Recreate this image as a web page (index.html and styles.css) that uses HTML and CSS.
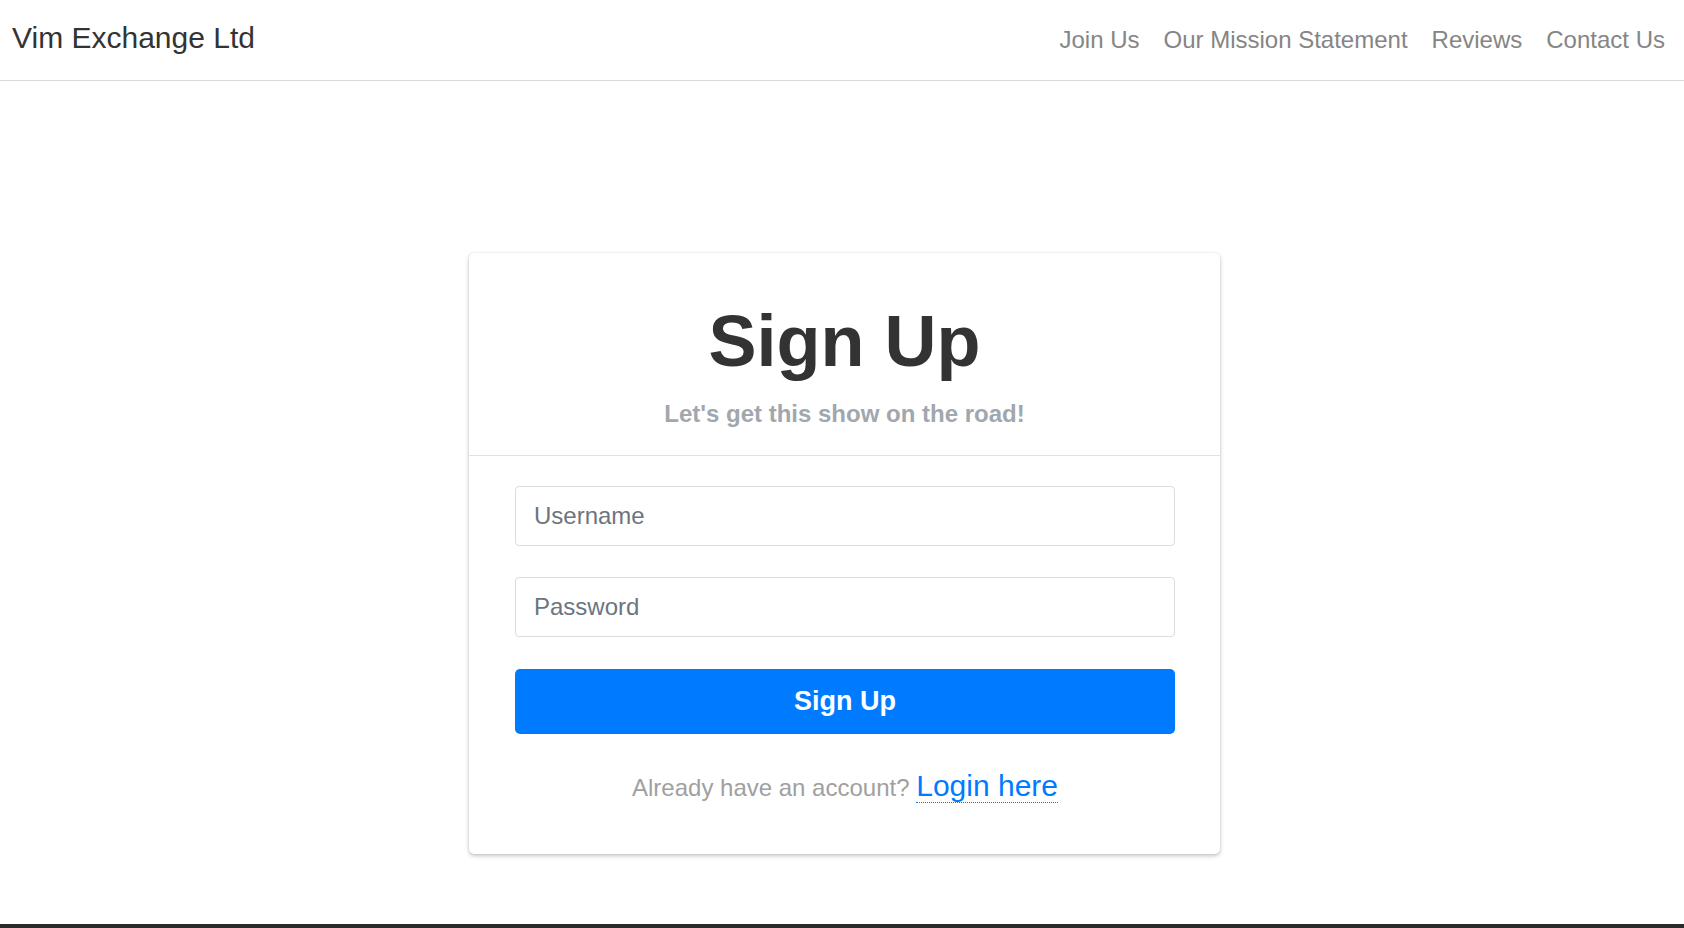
FILE: index.html
```html
<!DOCTYPE html>
<html lang="en">
<head>
<meta charset="utf-8">
<title>Vim Exchange Ltd - Sign Up</title>
<link rel="stylesheet" href="styles.css">
</head>
<body>
<header class="navbar">
  <a class="brand" href="#">Vim Exchange Ltd</a>
  <nav class="nav">
    <a class="nav-link" href="#">Join Us</a>
    <a class="nav-link" href="#">Our Mission Statement</a>
    <a class="nav-link" href="#">Reviews</a>
    <a class="nav-link" href="#">Contact Us</a>
  </nav>
</header>
<main class="main">
  <section class="card">
    <div class="card-header">
      <h1 class="title">Sign Up</h1>
      <p class="subtitle">Let's get this show on the road!</p>
    </div>
    <form class="card-body">
      <input class="field" type="text" placeholder="Username">
      <input class="field field-last" type="password" placeholder="Password">
      <button class="btn" type="button">Sign Up</button>
      <p class="login">Already have an account? <a class="login-link" href="#">Login here</a></p>
    </form>
  </section>
</main>
<footer class="footer"></footer>
</body>
</html>
```

FILE: styles.css
```css
* { box-sizing: border-box; }
html, body { margin: 0; padding: 0; }
body {
  font-family: "Liberation Sans", Arial, sans-serif;
  background: #fff;
  color: #333;
  height: 100vh;
  display: flex;
  flex-direction: column;
  overflow: hidden;
}
.navbar {
  height: 81px;
  display: flex;
  align-items: baseline;
  justify-content: space-between;
  padding: 15px 7px 0 12px;
  border-bottom: 1px solid #dadada;
  flex: none;
}
.brand {
  font-size: 30px;
  line-height: 1.5;
  color: #333;
  text-decoration: none;
}
.nav { display: flex; align-items: baseline; }
.nav-link {
  font-size: 24px;
  line-height: 1.5;
  padding: 0 12px;
  color: #858585;
  text-decoration: none;
}
.main {
  flex: 1;
  display: flex;
  justify-content: center;
  align-items: flex-start;
  padding: 172px 0 0 5px;
}
.card {
  width: 751px;
  background: #fff;
  border-radius: 5px;
  box-shadow: 0 2px 4px rgba(0,0,0,0.22), 0 0 2px rgba(0,0,0,0.12);
}
.card-header {
  padding: 45px 45px 23px;
  text-align: center;
  border-bottom: 1px solid #e2e2e2;
}
.title {
  margin: 0;
  font-size: 72px;
  line-height: 1.2;
  font-weight: bold;
  color: #333;
}
.subtitle {
  margin: 12px 0 0;
  font-size: 24px;
  line-height: 1.5;
  font-weight: bold;
  color: #a0a7ad;
}
.card-body {
  padding: 30px 45px 46px 46px;
  display: flex;
  flex-direction: column;
  margin: 0;
}
.field {
  height: 60px;
  margin: 0 0 31px;
  padding: 0 18px;
  font-family: inherit;
  font-size: 24px;
  color: #495057;
  border: 1px solid #dcdcdc;
  border-radius: 4px;
  background: #fff;
  outline: none;
}
.field-last { margin-bottom: 32px; }
.field::placeholder { color: #6c757d; opacity: 1; }
.btn {
  height: 65px;
  border: none;
  border-radius: 5px;
  background: #007bff;
  color: #fff;
  font-family: inherit;
  font-size: 27px;
  font-weight: bold;
  cursor: pointer;
}
.login {
  margin: 29px 0 0;
  text-align: center;
  font-size: 24px;
  line-height: 1.5;
  color: #a0a0a0;
}
.login-link {
  font-size: 30px;
  color: #007bff;
  text-decoration: none;
  border-bottom: 1px dotted #007bff;
}
.footer {
  height: 4px;
  background: #2b2b2b;
  flex: none;
}
```
